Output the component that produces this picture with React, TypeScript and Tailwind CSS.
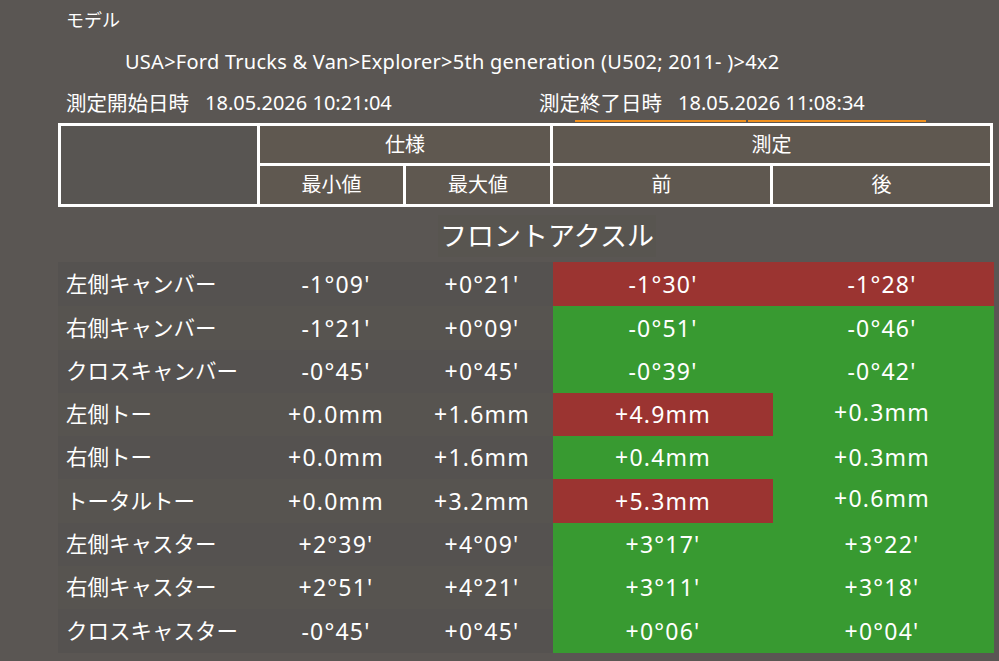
import React from "react";

type Row = {
  label: string;
  min: string;
  max: string;
  front: string;
  rear: string;
  frontBad: boolean;
  rearBad: boolean;
  h: string;
};

const rows: Row[] = [
  { label: "左側キャンバー", min: "-1°09'", max: "+0°21'", front: "-1°30'", rear: "-1°28'", frontBad: true, rearBad: true, h: "h-[44px]" },
  { label: "右側キャンバー", min: "-1°21'", max: "+0°09'", front: "-0°51'", rear: "-0°46'", frontBad: false, rearBad: false, h: "h-[44px]" },
  { label: "クロスキャンバー", min: "-0°45'", max: "+0°45'", front: "-0°39'", rear: "-0°42'", frontBad: false, rearBad: false, h: "h-[43px]" },
  { label: "左側トー", min: "+0.0mm", max: "+1.6mm", front: "+4.9mm", rear: "+0.3mm", frontBad: true, rearBad: false, h: "h-[43px]" },
  { label: "右側トー", min: "+0.0mm", max: "+1.6mm", front: "+0.4mm", rear: "+0.3mm", frontBad: false, rearBad: false, h: "h-[43px]" },
  { label: "トータルトー", min: "+0.0mm", max: "+3.2mm", front: "+5.3mm", rear: "+0.6mm", frontBad: true, rearBad: false, h: "h-[44px]" },
  { label: "左側キャスター", min: "+2°39'", max: "+4°09'", front: "+3°17'", rear: "+3°22'", frontBad: false, rearBad: false, h: "h-[43px]" },
  { label: "右側キャスター", min: "+2°51'", max: "+4°21'", front: "+3°11'", rear: "+3°18'", frontBad: false, rearBad: false, h: "h-[43px]" },
  { label: "クロスキャスター", min: "-0°45'", max: "+0°45'", front: "+0°06'", rear: "+0°04'", frontBad: false, rearBad: false, h: "h-[44px]" },
];

export default function App() {
  return (
    <div
      className="relative w-[999px] h-[661px] overflow-hidden bg-[#5a5653] text-white"
      style={{ fontFamily: '"Noto Sans", "Noto Sans CJK JP", sans-serif' }}
    >
      {/* header info */}
      <div className="flex h-[40px] items-center pl-[66px] text-[18px]">モデル</div>
      <div className="flex h-[43px] items-center pl-[125px] text-[20px] tracking-[0.25px]">
        USA&gt;Ford Trucks &amp; Van&gt;Explorer&gt;5th generation (U502; 2011- )&gt;4x2
      </div>
      <div className="relative flex h-[40px] items-center text-[20px]">
        <div className="flex w-[539px] pl-[66px]">
          <span className="text-[20.5px]">測定開始日時</span>
          <span className="ml-[16px]">18.05.2026 10:21:04</span>
        </div>
        <div className="flex">
          <span className="text-[20.5px]">測定終了日時</span>
          <span className="ml-[16px]">18.05.2026 11:08:34</span>
        </div>
        <div className="absolute left-[575px] top-[37px] h-[2px] w-[171px] bg-[#f0901e]" />
        <div className="absolute left-[748px] top-[37px] h-[2px] w-[178px] bg-[#f0901e]" />
      </div>

      {/* header table */}
      <div className="ml-[58px] grid h-[84px] w-[935px] grid-cols-[196px_143px_144px_217px_217px] grid-rows-[37px_38px] gap-[3px] bg-white p-[3px] text-[20px]">
        <div className="row-span-2 bg-[#585552]" />
        <div className="col-span-2 flex items-center justify-center bg-[#5f5850]">仕様</div>
        <div className="col-span-2 flex items-center justify-center bg-[#5f5850]">測定</div>
        <div className="flex items-center justify-center bg-[#5f5850]">最小値</div>
        <div className="flex items-center justify-center bg-[#5f5850]">最大値</div>
        <div className="flex items-center justify-center bg-[#5f5850]">前</div>
        <div className="flex items-center justify-center bg-[#5f5850]">後</div>
      </div>

      {/* section title */}
      <div className="flex h-[55px] w-[1094px] items-center justify-center pt-[3px] text-[27px]">
        <span className="bg-[#585550] px-[2px] leading-[42px]">フロントアクスル</span>
      </div>

      {/* data rows */}
      <div className="ml-[58px] flex w-[936px] flex-col">
        {rows.map((r, i) => (
          <div
            key={r.label}
            className={`grid ${r.h} grid-cols-[201px_146px_148px_220px_221px] text-[23px] tracking-[1.2px]`}
          >
            <div className={`flex items-center pl-[8px] text-[21.5px] tracking-normal ${i % 2 === 0 ? "bg-[#555250]" : "bg-[#575450]"}`}>
              {r.label}
            </div>
            <div className={`flex items-center justify-center pl-[8px] ${i % 2 === 0 ? "bg-[#555250]" : "bg-[#575450]"}`}>
              {r.min}
            </div>
            <div className={`flex items-center justify-center pl-[6px] ${i % 2 === 0 ? "bg-[#555250]" : "bg-[#575450]"}`}>
              {r.max}
            </div>
            <div className={`flex items-center justify-center ${r.frontBad ? "bg-[#9b3431]" : "bg-[#389a31]"}`}>
              {r.front}
            </div>
            <div className={`flex items-center justify-center pr-[3px] ${r.rearBad ? "bg-[#9b3431]" : "bg-[#389a31]"}`}>
              <span className={r.frontBad && !r.rearBad ? "-mt-[5px]" : ""}>{r.rear}</span>
            </div>
          </div>
        ))}
      </div>
    </div>
  );
}
